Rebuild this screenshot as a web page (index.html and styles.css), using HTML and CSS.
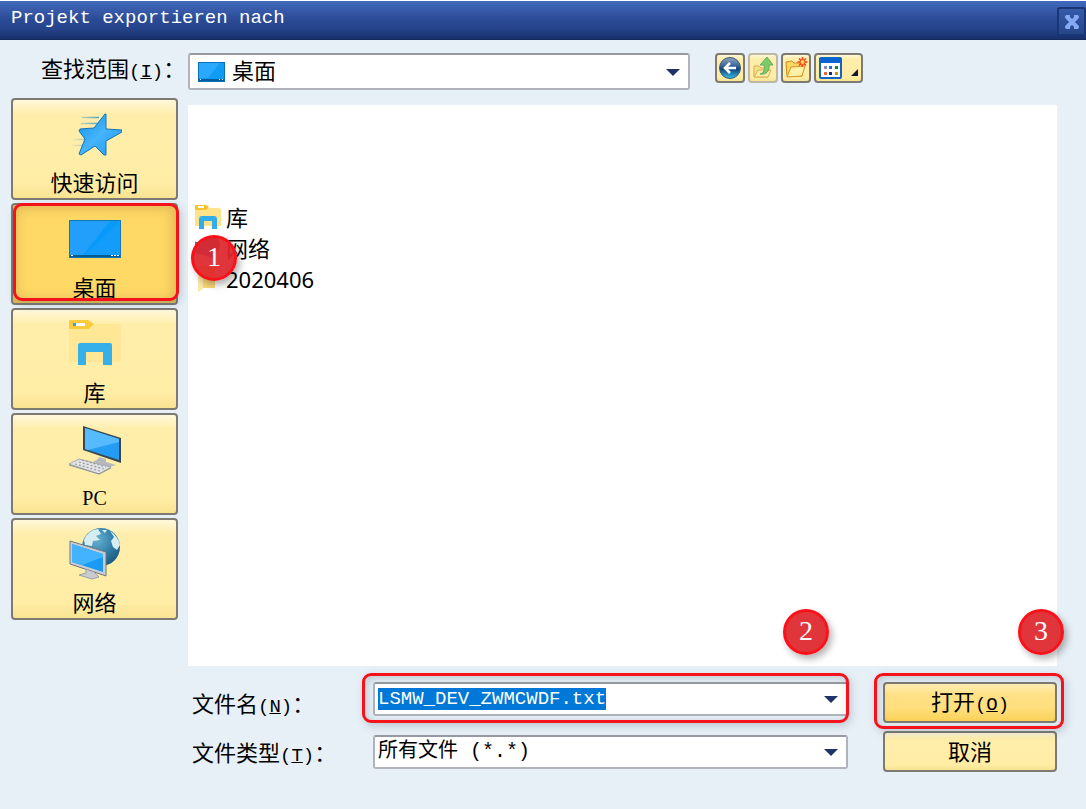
FILE: index.html
```
<!DOCTYPE html>
<html lang="zh-CN">

<head>
    <meta charset="UTF-8">
    <meta name="viewport" content="width=device-width, initial-scale=1.0">
    <title>Projekt exportieren nach</title>
    <link rel="stylesheet" href="styles.css">
</head>

<body>
    <header class="title-bar">
        <h1>Projekt exportieren nach</h1>
        <button class="close" type="button" aria-label="Close">
            <svg width="18" height="18" viewBox="0 0 18 18">
                <path d="M4 4L14 14M14 4L4 14" stroke="#86a9f5" stroke-width="4" stroke-linecap="round" />
                <path d="M3 3h3v3M15 3h-3v3M3 15h3v-3M15 15h-3v-3" fill="none" stroke="#86a9f5" stroke-width="2" />
            </svg>
        </button>
    </header>

    <form class="dialog">
        <label class="look-label" for="look-in">查找范围<span class="key">(<u>I</u>)</span>：</label>
        <div class="look-row">
            <div class="combo look-combo">
                <svg class="combo-icon" width="27" height="20" viewBox="0 0 27 20">
                    <rect x=".5" y=".5" width="26" height="19" fill="#109bf5" stroke="#0872b8" />
                    <path d="M1 1h21L10 16H1z" fill="#2aa8fb" />
                    <path d="M1 17h25v2H1z" fill="#0a5c9c" />
                    <path d="M2 17h1v1H2zM21 17h1v1h-1zM24 17h1v1h-1z" fill="#fff" />
                </svg>
                <select id="look-in">
                    <option>桌面</option>
                </select>
                <svg class="arrow" width="14" height="8" viewBox="0 0 14 8">
                    <path d="M0 1h14L7 8z" fill="#1e3368" />
                </svg>
            </div>
            <div class="tools">
                <button class="tool" type="button" aria-label="Back">
                    <svg width="24" height="24" viewBox="0 0 24 24">
                        <defs>
                            <linearGradient id="ball" x1="0" y1="0" x2="0" y2="1">
                                <stop offset="0" stop-color="#8fa7c4" />
                                <stop offset=".45" stop-color="#2d5c90" />
                                <stop offset=".55" stop-color="#12427a" />
                                <stop offset="1" stop-color="#35c3ea" />
                            </linearGradient>
                        </defs>
                        <circle cx="12" cy="12" r="10.5" fill="url(#ball)" stroke="#3c5878" />
                        <path d="M18 12H7M12 7l-5 5 5 5" fill="none" stroke="#fff" stroke-width="2.6" />
                    </svg>
                </button>
                <button class="tool faded" type="button" aria-label="Up one level">
                    <svg width="24" height="24" viewBox="0 0 24 24">
                        <path d="M3 21V10h5l2 2h7v9z" fill="#f7dc84" stroke="#cf9f3d" />
                        <path d="M3 21l4-7h13l-3 7z" fill="#fdeaa8" stroke="#cf9f3d" />
                        <path d="M9 18c4-1 5-4 4-9H9l7-8 6 8h-4c1 6-3 10-9 9z" fill="#5cc25c" stroke="#3b9c4c" />
                    </svg>
                </button>
                <button class="tool" type="button" aria-label="New folder">
                    <svg width="24" height="24" viewBox="0 0 24 24">
                        <path d="M3 20L2 6l6-1 2 2h8v13z" fill="#f8d766" stroke="#c98a1d" />
                        <path d="M3 21l4-10 14-1-3 10z" fill="#fff0a8" stroke="#d49222" />
                        <path d="M18.500 1v10M13.500 6h10M15 2.500l7 7M22 2.500l-7 7" stroke="#f5401c" stroke-width="1.500" />
                        <circle cx="18.500" cy="6" r="2.500" fill="#ffd84a" stroke="#f5401c" />
                    </svg>
                </button>
                <button class="tool wide" type="button" aria-label="View">
                    <svg width="23" height="22" viewBox="0 0 23 22">
                        <rect x="1" y="1" width="21" height="20" rx="1" fill="#fff" stroke="#1265c4" stroke-width="2" />
                        <path d="M0 1h23v5H0z" fill="#0a63d0" />
                        <path d="M5 9h3v3H5z" fill="#8d86c4" />
                        <path d="M10 9h3v3h-3z" fill="#1970d8" />
                        <path d="M16 9h3v3h-3z" fill="#178a28" />
                        <path d="M5 15h3v3H5z" fill="#ee6640" />
                        <path d="M10 15h3v3h-3z" fill="#12307c" />
                        <path d="M16 15h3v3h-3z" fill="#c79518" />
                    </svg>
                    <svg class="corner" width="7" height="7" viewBox="0 0 7 7">
                        <path d="M7 0v7H0z" fill="#15152b" />
                    </svg>
                </button>
            </div>
        </div>

        <nav class="places">
            <button class="place" type="button">
                <svg width="54" height="56" viewBox="0 0 54 56">
                    <defs>
                        <linearGradient id="star" x1="0" y1="0" x2="1" y2="1">
                            <stop offset="0" stop-color="#1591ee" />
                            <stop offset=".5" stop-color="#45b4fb" />
                            <stop offset="1" stop-color="#1b96f1" />
                        </linearGradient>
                        <linearGradient id="trail" gradientUnits="userSpaceOnUse" x1="2" y1="0" x2="34" y2="0">
                            <stop offset="0" stop-color="#5aa9c8" stop-opacity="0" />
                            <stop offset="1" stop-color="#3c93c4" />
                        </linearGradient>
                    </defs>
                    <path d="M14 10.500h17M13 16.500h16M5 32.500h15M2 38.500h14" stroke="url(#trail)" stroke-width="1.500" />
                    <path d="M37 7h1v15l16 1v2L38 34v14h-2l-9-9-14 9-2-1 6-15-6-8 1-2 14-1z" fill="url(#star)" stroke="#1674b5" stroke-linejoin="round" />
                </svg>
                <span>快速访问</span>
            </button>
            <div class="marked">
                <button class="place active" type="button">
                    <svg width="54" height="56" viewBox="0 0 54 56">
                        <rect x="1.500" y="8.500" width="51" height="37" fill="#089af8" stroke="#1277b3" />
                        <path d="M2 9h40L15 43H2z" fill="#229ffa" />
                        <path d="M52 9v34H17z" fill="#229ffa" opacity=".45" />
                        <path d="M2 43h50v2H2z" fill="#075997" />
                        <path d="M3 43h2v1H3zM43 43h2v1h-2zM46 43h2v1h-2zM49 43h2v1h-2z" fill="#fff" />
                    </svg>
                    <span>桌面</span>
                </button>
                <i class="outline"></i>
                <b class="step step-one">1</b>
            </div>
            <button class="place" type="button">
                <svg width="54" height="56" viewBox="0 0 54 56">
                    <path d="M1 7h49q3 0 3 3v33q0 2-3 2H3q-2 0-2-2z" fill="#ffe796" />
                    <path d="M1 4q0-1 2-1h17l6 4-5 5H1z" fill="#fccb3c" />
                    <path d="M5 6h12v3H5z" fill="#fff" />
                    <path d="M5 6h3v3H5z" fill="#2da6dd" />
                    <path d="M10 48V28q0-2 2-2h30q2 0 2 2v20h-9V35H18v13z" fill="#37b0e9" />
                </svg>
                <span>库</span>
            </button>
            <button class="place" type="button">
                <svg width="54" height="56" viewBox="0 0 54 56">
                    <path d="M15 4l38 12v25L15 28z" fill="#3b4650" />
                    <path d="M17 6l34 11v21L17 27z" fill="#249cf3" />
                    <path d="M17 6l34 11v3L20 28l-3-1z" fill="#56baff" />
                    <path d="M31 35l7 2v3l10 3-6 2-17-5 5-3z" fill="#b4b9bd" />
                    <path d="M1 42l10-5 32 8-12 7z" fill="#e2e3e5" stroke="#a6a9ae" />
                    <path d="M7 42l25 7M11 40l25 7M14 38l24 7" stroke="#969ba2" stroke-width="1.200" stroke-dasharray="2 2" />
                    <path d="M1 43l30 9 12-6" fill="none" stroke="#8b9096" />
                </svg>
                <span class="latin">PC</span>
            </button>
            <button class="place" type="button">
                <svg width="54" height="56" viewBox="0 0 54 56">
                    <defs>
                        <radialGradient id="globe" cx=".4" cy=".3" r=".75">
                            <stop offset="0" stop-color="#68b1d1" />
                            <stop offset=".6" stop-color="#2d7ca6" />
                            <stop offset="1" stop-color="#1b577c" />
                        </radialGradient>
                    </defs>
                    <circle cx="33" cy="20" r="19" fill="url(#globe)" />
                    <path d="M16 13Q20 3 30 2l3 5-5 2 4 4-7 1-1 5-7-1zM42 4q8 5 10 14l-3 5-4-3-2-6 3-4zM24 7l3-2 2 3zM34 3l5 0-2 3z" fill="#d6edf2" />
                    <path d="M2 14l36 11v24L2 37z" fill="#c7cdd2" stroke="#6d7880" />
                    <path d="M4 17l31 10v18L4 35z" fill="#199bf5" />
                    <path d="M4 17l31 10v3L14 38 4 35z" fill="#43b3ff" />
                    <path d="M18 42l8 3 5 5-7 2-13-4 7-2z" fill="#c9cccf" stroke="#9a9fa3" />
                </svg>
                <span>网络</span>
            </button>
        </nav>

        <main class="content">
            <ul class="files">
                <li>
                    <svg width="26" height="26" viewBox="0 0 26 26">
                        <path d="M0 4h24q2 0 2 2v16H0z" fill="#ffe38a" />
                        <path d="M0 2q0-1 1-1h10l3 2-3 3H0z" fill="#f6c22f" />
                        <path d="M3 2h6v2H3z" fill="#fff" />
                        <path d="M4 25V15q0-3 3-3h12q3 0 3 3v10h-5v-8H9v8z" fill="#31ade8" />
                    </svg>
                    库
                </li>
                <li>
                    <svg width="26" height="26" viewBox="0 0 26 26">
                        <circle cx="16" cy="10" r="9" fill="#3d6d98" />
                        <path d="M0 7l18 5v11L0 17z" fill="#2b8fd9" stroke="#5d6f80" />
                    </svg>
                    网络
                </li>
                <li>
                    <svg width="26" height="26" viewBox="0 0 26 26">
                        <path d="M3 0h17v22H8l-5 3z" fill="#f9d878" />
                        <path d="M3 0l5 3v20l-5 3z" fill="#fbe7a6" />
                    </svg>
                    2020406
                </li>
            </ul>

            <div class="fields">
                <label for="file-name">文件名<span class="key">(<u>N</u>)</span>：</label>
                <div class="marked">
                    <div class="combo">
                        <input id="file-name" type="text" value="LSMW_DEV_ZWMCWDF.txt" spellcheck="false" autofocus>
                        <svg class="arrow" width="14" height="8" viewBox="0 0 14 8">
                            <path d="M0 1h14L7 8z" fill="#1e3368" />
                        </svg>
                    </div>
                    <i class="outline field-outline"></i>
                    <b class="step step-two">2</b>
                </div>
                <div class="marked action">
                    <button class="primary" type="button">打开<span class="key">(<u>O</u>)</span></button>
                    <i class="outline action-outline"></i>
                    <b class="step step-three">3</b>
                </div>

                <label for="file-type">文件类型<span class="key">(<u>T</u>)</span>：</label>
                <div class="combo type-combo">
                    <select id="file-type">
                        <option>所有文件 (*.*)</option>
                    </select>
                    <svg class="arrow" width="14" height="8" viewBox="0 0 14 8">
                        <path d="M0 1h14L7 8z" fill="#1e3368" />
                    </svg>
                </div>
                <div class="action">
                    <button type="button">取消</button>
                </div>
            </div>
        </main>
    </form>

    <script>
        // The suggested name is selected so it can be typed over
        const fileName = document.getElementById('file-name');
        fileName.focus();
        fileName.select();
    </script>
</body>

</html>
```
FILE: styles.css
```
* {
    box-sizing: border-box;
    margin: 0;
    padding: 0;
}

body {
    min-height: 100vh;
    background-color: #e8f0f7;
    color: #000;
    font-family: "Noto Sans CJK SC", sans-serif;
    font-size: 22px;
    line-height: 28px;
}

button,
input,
select {
    font: inherit;
    color: inherit;
}

svg {
    display: block;
    flex: none;
}

/* Title bar */
.title-bar {
    display: flex;
    justify-content: space-between;
    height: 40px;
    padding-left: 11px;
    border-top: 1px solid #fff;
    border-bottom: 1px solid #12295a;
    background: linear-gradient(#4269bd, #2b4a95 50%, #26448c 72%, #17306b);
    color: #fff;
}

h1 {
    font-family: "Liberation Mono", monospace;
    font-size: 19px;
    font-weight: normal;
    line-height: 34px;
}

.close {
    display: flex;
    align-items: center;
    justify-content: center;
    width: 29px;
    height: 29px;
    margin-top: 6px;
    border: 2px solid #1a3674;
    border-radius: 3px;
    background: linear-gradient(#365aa9, #274689);
}

/* Dialog */
.dialog {
    display: grid;
    grid-template-columns: 167px 1fr;
    column-gap: 10px;
    row-gap: 8px;
    padding: 13px 29px 16px 11px;
}

.look-label {
    padding-left: 30px;
    white-space: nowrap;
}

.key {
    font-family: "Liberation Mono", monospace;
    font-size: 19px;
}

.latin {
    font-family: "Liberation Serif", serif;
    font-size: 20px;
    line-height: 32px;
}

.look-row {
    display: flex;
    align-items: flex-start;
    gap: 25px;
    padding-right: 194px;
}

.combo {
    display: flex;
    align-items: center;
    height: 34px;
    padding-right: 8px;
    border: 2px solid #b0b4ba;
    border-top-color: #969aa0;
    border-radius: 3px;
    background-color: #fff;
}

.combo input,
.combo select {
    flex: 1;
    min-width: 0;
    padding-left: 3px;
    border: none;
    outline: none;
    background: none;
    appearance: none;
}

.combo.look-combo {
    flex: 1;
    height: 37px;
    padding-left: 8px;
}

.combo.look-combo select {
    padding: 0 0 6px 7px;
}

.arrow {
    pointer-events: none;
}

.tools {
    display: flex;
    gap: 3px;
}

.tool,
.place,
.action button {
    border: 2px solid #7d7a72;
    border-radius: 4px;
    background: linear-gradient(#fff8dc, #ffeeab 14%, #ffeda5 85%, #f8e392);
}

.tool {
    display: flex;
    align-items: center;
    justify-content: center;
    width: 30px;
    height: 30px;
}

.tool.wide {
    justify-content: space-between;
    width: 49px;
    padding: 0 3px;
}

.tool .corner {
    margin-top: 8px;
}

.tool.faded {
    border-color: #bcb8a4;
}

.faded svg {
    opacity: 0.8;
}

/* Places */
.places {
    display: flex;
    flex-direction: column;
    gap: 3px;
}

.place {
    display: flex;
    flex-direction: column;
    align-items: center;
    gap: 4px;
    width: 100%;
    height: 102px;
    padding-top: 7px;
}

.place.active {
    background: #ffd966;
    box-shadow: inset 0 0 12px 4px #dfb955;
}

.marked {
    position: relative;
}

.outline {
    position: absolute;
    inset: 0 -1px 4px 2px;
    border: 3px solid #f5121a;
    border-radius: 9px;
    box-shadow: 2px 3px 8px rgba(60, 80, 100, 0.25);
    pointer-events: none;
}

.field-outline,
.action-outline {
    box-shadow: 2px 3px 8px rgba(60, 80, 100, 0.25), inset 2px 2px 8px rgba(60, 80, 100, 0.25);
}

.field-outline {
    inset: -9px -1px 0 -11px;
}

.action-outline {
    inset: -9px -7px -6px -9px;
}

.step {
    position: absolute;
    z-index: 1;
    width: 46px;
    height: 46px;
    border: 3px solid #fb1119;
    border-radius: 50%;
    background-color: rgba(222, 38, 43, 0.93);
    box-shadow: 3px 4px 7px rgba(0, 0, 0, 0.3);
    color: #fff;
    font-family: "Liberation Serif", serif;
    font-size: 28px;
    font-weight: normal;
    line-height: 38px;
    text-align: center;
}

.step-one {
    top: 32px;
    right: -59px;
}

.step-two {
    top: -73px;
    right: 19px;
}

.step-three {
    top: -73px;
    right: -7px;
}

/* File list */
.content {
    padding-top: 7px;
}

.files {
    min-height: 561px;
    padding: 96px 7px;
    background-color: #fff;
    font-family: "Noto Sans", "Noto Sans CJK SC", sans-serif;
    list-style: none;
}

.files li {
    display: flex;
    align-items: center;
    gap: 5px;
    height: 31px;
    line-height: 24px;
}

/* File name, type and actions */
.fields {
    display: grid;
    grid-template-columns: 185px 1fr 209px;
    grid-auto-rows: 41px;
    row-gap: 8px;
    padding-top: 16px;
}

.fields > label {
    padding-left: 4px;
    line-height: 41px;
}

.type-combo {
    align-self: center;
}

.action {
    margin-left: 35px;
}

.action button {
    display: block;
    width: 100%;
    height: 41px;
    line-height: 32px;
    padding-bottom: 3px;
}

.action .primary {
    background: linear-gradient(#ffeeb4, #ffe085 30%, #ffdf7d 65%, #fbd258);
}

#file-name {
    height: 22px;
    font-family: "Liberation Mono", monospace;
    font-size: 19px;
    line-height: 22px;
}

#file-name::selection {
    background-color: #0078d7;
    color: #fff;
}

#file-type {
    font-family: "Liberation Mono", "Noto Sans CJK SC", monospace;
    font-size: 20px;
}
```
